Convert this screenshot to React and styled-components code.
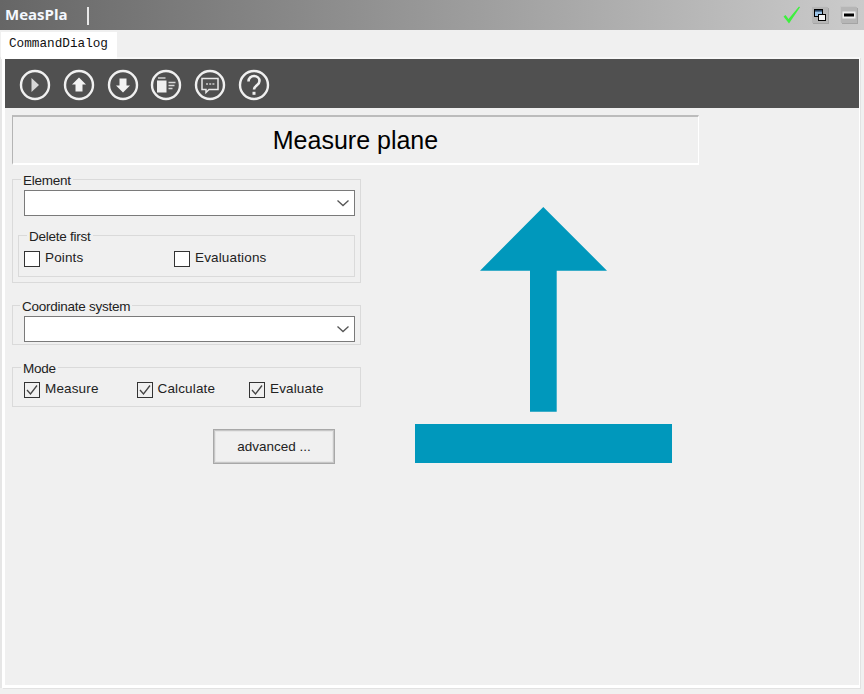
import React from 'react';
import styled, { createGlobalStyle } from 'styled-components';

const Global = createGlobalStyle`
  html, body { margin: 0; padding: 0; background: #f0f0f0; }
  #root { width: 864px; height: 694px; overflow: hidden; }
  * { box-sizing: border-box; }
`;

const Page = styled.div`
  width: 864px; height: 694px; background: #f0f0f0;
  display: flex; flex-direction: column;
  font-family: "Liberation Sans", Arial, sans-serif;
  color: #222;
`;
const TitleBar = styled.header`
  height: 30px; flex: none; display: flex; align-items: center;
  padding: 0 7px 0 5px;
  background: linear-gradient(90deg, #666 0%, #cbcbcb 100%);
`;
const AppName = styled.span`
  font: 700 15px/20px "Open Sans", sans-serif; color: #f4f8ff; width: 82px; margin-top: -2px;
`;
const Caret = styled.span`
  width: 2px; height: 18px; background: #e8e8e8; margin-top: 1px;
`;
const WindowTools = styled.div`
  margin-left: auto; display: flex; align-items: center;
`;
const WinButton = styled.button`
  width: 16px; height: 16px; padding: 0; border: none; margin-left: ${p => p.$gap}px;
  background: #b6b6b6; box-shadow: 1px 1px 0 #a4a4a4, -1px -1px 0 #c4c4c4;
  display: flex; align-items: center; justify-content: center;
`;
const TabStrip = styled.div`
  height: 27px; flex: none; padding: 2px 0 0 1px; display: flex;
`;
const Tab = styled.div`
  width: 116px; height: 27px; background: #fff; padding: 5px 0 0 8px; position: relative;
  font: 12.7px/14px "Liberation Mono", monospace; color: #111;
`;
const Frame = styled.div`
  flex: 1; margin: 0 4px 6px 2px;
  border-style: solid; border-color: #f8f8f8 #fff #fff #fff;
  border-width: 2px 1px 3px 3px;
  box-shadow: -2px 0 0 #e6e6e6, 1px 1px 0 #e2e2e2;
  display: flex; flex-direction: column; min-height: 0;
`;
const Toolbar = styled.nav`
  height: 49px; flex: none; background: #505050;
  display: flex; align-items: center; padding: 2px 0 0 14px; gap: 11.8px;
`;
const ToolIcon = styled.svg`
  width: 32px; height: 32px; display: block; flex: none;
`;
const Content = styled.main`
  padding: 7px 0 0 7px;
`;
const Banner = styled.h1`
  width: 687px; height: 50px; margin: 0 0 4.5px; font-weight: 400;
  font-size: 25px; line-height: 47px; text-align: center; color: #000;
  border-style: solid; border-width: 2px 1px 2px 1px;
  border-color: #bcbcbc #fff #fff #b4b4b4;
`;
const Columns = styled.div`
  display: flex; align-items: flex-start;
`;
const FormCol = styled.div`
  width: 349px; flex: none; display: flex; flex-direction: column;
`;
const Group = styled.fieldset`
  margin: ${p => p.$top || 0}px 0 ${p => p.$after || 0}px ${p => p.$inset || 0}px; min-width: 0;
  padding: ${p => p.$pad || '1.5px 5px 5px 11px'};
  border: 1px solid #dadada;
`;
const Legend = styled.legend`
  padding: 3px 2px 0; margin-left: ${p => p.$ml}px; font-size: 13.5px; line-height: 16px; letter-spacing: -0.25px;
`;
const Combo = styled.div`
  height: 26px; background: #fff; border: 1px solid #7a7a7a;
  display: flex; align-items: center; justify-content: flex-end; padding-right: 3px;
`;
const Row = styled.div`
  display: flex; align-items: flex-start; height: 16px;
`;
const Check = styled.label`
  display: flex; align-items: flex-start; width: ${p => p.$w}px; flex: none;
  font-size: 13.5px; line-height: 14px; letter-spacing: 0.15px;
`;
const Box = styled.span`
  width: 16px; height: 16px; flex: none; margin-right: 5px; background: ${p => p.$on ? 'none' : '#fff'};
  border: 1px solid #333; display: flex; align-items: center; justify-content: center;
`;
const Advanced = styled.button`
  align-self: flex-start; width: 122px; height: 35px; margin: 22px 0 0 201px;
  background: #f0f0f0; border: 1px solid #a8a8a8;
  box-shadow: inset 0 0 0 1px #c6c6c6, inset 0 0 0 2px #e6e6e6;
  font: 13.5px "Liberation Sans", sans-serif; color: #222;
`;
const Picture = styled.svg`
  width: 257px; height: 256px; margin: 37.5px 0 0 54px; flex: none; display: block;
`;

const Tick = () => (
  <svg width="14" height="14" viewBox="0 0 14 14"><path d="M2 7l3.500 4L12 2.500" fill="none" stroke="#444" strokeWidth="1.3" /></svg>
);
const Chevron = () => (
  <svg width="16" height="16" viewBox="0 0 16 16"><path d="M2.500 5.500L8 10.500l5.500-5" fill="none" stroke="#555" strokeWidth="1.3" /></svg>
);
const Ring = ({ children }) => (
  <ToolIcon viewBox="0 0 32 32">
    <circle cx="16" cy="16" r="14" fill="none" stroke="#f0f0f0" strokeWidth="2.4" />
    {children}
  </ToolIcon>
);

export default function App() {
  return (
    <Page>
      <Global />
      <TitleBar>
        <AppName>MeasPla</AppName>
        <Caret />
        <WindowTools>
          <svg width="18" height="18" viewBox="0 0 18 18"><path d="M0.500 10.500l2-1.500 3 4L16 0.500l1 .8L6 17.500z" fill="#3df03d" /></svg>
          <WinButton $gap={11} aria-label="Restore">
            <svg width="14" height="14" viewBox="0 0 14 14">
              <rect x="1.500" y="1.500" width="8" height="7" fill="#9cc4e8" stroke="#000" />
              <rect x="2" y="2" width="7" height="1.600" fill="#26415e" />
              <rect x="5.500" y="6.500" width="7" height="6" fill="#f4f4f4" stroke="#000" />
            </svg>
          </WinButton>
          <WinButton $gap={13} aria-label="Minimize">
            <svg width="14" height="8" viewBox="0 0 14 8"><rect x="0.500" y="0.500" width="13" height="7" fill="#eee" /><rect x="2" y="2.500" width="10" height="3" fill="#000" /></svg>
          </WinButton>
        </WindowTools>
      </TitleBar>
      <TabStrip><Tab>CommandDialog</Tab></TabStrip>
      <Frame>
        <Toolbar>
          <Ring><path d="M12.500 9L20 16l-7.500 7z" fill="#d8d8d8" /></Ring>
          <Ring><path d="M16 8.500l7 7h-3.500V22.500h-7V15.500H9z" fill="#f2f2f2" /></Ring>
          <Ring><path d="M16 23.500l7-7h-3.500V9.500h-7v7H9z" fill="#f2f2f2" /></Ring>
          <Ring>
            <path d="M7 11.500h9.500v12H7z" fill="#f0f0f0" />
            <path d="M8 9h7.500" stroke="#f0f0f0" strokeWidth="1.200" />
            <path d="M18.500 13.500h7M18.500 16.500h6M18.500 19.500h4" stroke="#d8d8d8" strokeWidth="1.400" />
          </Ring>
          <Ring>
            <path d="M8 9.500h16v11H15l-3 3v-3H8z" fill="none" stroke="#e8e8e8" strokeWidth="1.500" />
            <path d="M12 15h2M15.200 15h2M18.400 15h2" stroke="#ccc" strokeWidth="1.400" />
          </Ring>
          <Ring>
            <path d="M10.500 12.500c0-3.500 2.500-5.500 5.500-5.500s5.500 2 5.500 5c0 4.500-5.500 4.500-5.500 8.500" fill="none" stroke="#f0f0f0" strokeWidth="2.600" />
            <rect x="14.500" y="22.800" width="3" height="3" fill="#f0f0f0" />
          </Ring>
        </Toolbar>
        <Content>
          <Banner>Measure plane</Banner>
          <Columns>
            <FormCol>
              <Group $after={13}>
                <Legend $ml={-3}>Element</Legend>
                <Combo><Chevron /></Combo>
                <Group $inset={-6} $top={10} $pad="5.500px 5px 9px 5px">
                  <Legend $ml={3}>Delete first</Legend>
                  <Row>
                    <Check $w={150}><Box />Points</Check>
                    <Check $w={150}><Box />Evaluations</Check>
                  </Row>
                </Group>
              </Group>
              <Group $after={13.5} $pad="1px 5px 2px 11px">
                <Legend $ml={-4}>Coordinate system</Legend>
                <Combo><Chevron /></Combo>
              </Group>
              <Group $pad="4.500px 5px 8px 11px">
                <Legend $ml={-3}>Mode</Legend>
                <Row>
                  <Check $w={112.5}><Box $on><Tick /></Box>Measure</Check>
                  <Check $w={112.5}><Box $on><Tick /></Box>Calculate</Check>
                  <Check $w={112.5}><Box $on><Tick /></Box>Evaluate</Check>
                </Row>
              </Group>
              <Advanced>advanced ...</Advanced>
            </FormCol>
            <Picture viewBox="0 0 257 256">
              <path d="M128.300 0L192 63.700H141.700V204.700H115V63.700H65Z" fill="#0098bc" />
              <rect x="0" y="217" width="257" height="39" fill="#0098bc" />
            </Picture>
          </Columns>
        </Content>
      </Frame>
    </Page>
  );
}
